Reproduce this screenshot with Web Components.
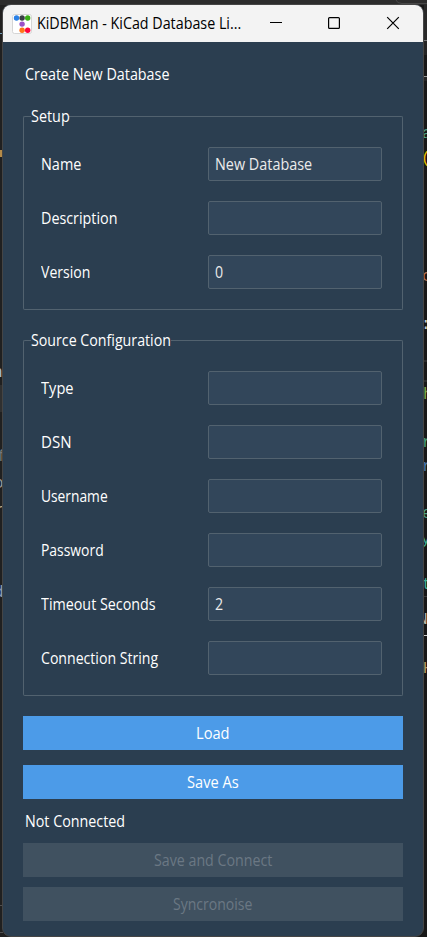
<!DOCTYPE html>
<html lang="en">
<head>
<meta charset="utf-8">
<title>KiDBMan</title>
<style>
html,body{margin:0;height:937px;overflow:hidden;background:#1e1e1e}
body{font:15.4px/20px "Open Sans","Noto Sans",sans-serif;color:#fff}
</style>
</head>
<body>
<editor-backdrop></editor-backdrop>
<app-window>
  <title-bar slot="title"><fit-text w="204">KiDBMan - KiCad Database Li...</fit-text></title-bar>
  <fit-text class="heading" w="144">Create New Database</fit-text>
  <field-group legend="Setup" legend-width="38" style="margin-top:22px;height:203px">
    <form-row label="Name" w="40" value="New Database" value-width="97"></form-row>
    <form-row label="Description" w="76"></form-row>
    <form-row label="Version" w="49" value="0" value-width="8"></form-row>
  </field-group>
  <field-group legend="Source Configuration" legend-width="140" style="margin-top:21px;height:365px">
    <form-row label="Type" w="32"></form-row>
    <form-row label="DSN" w="30"></form-row>
    <form-row label="Username" w="66"></form-row>
    <form-row label="Password" w="62"></form-row>
    <form-row label="Timeout Seconds" w="114" value="2" value-width="8"></form-row>
    <form-row label="Connection String" w="117"></form-row>
  </field-group>
  <push-button style="margin-top:20px"><fit-text w="33">Load</fit-text></push-button>
  <push-button style="margin-top:15px"><fit-text w="51">Save As</fit-text></push-button>
  <fit-text class="status" w="100">Not Connected</fit-text>
  <push-button disabled style="margin-top:11px"><fit-text w="118">Save and Connect</fit-text></push-button>
  <push-button disabled style="margin-top:10px"><fit-text w="79">Syncronoise</fit-text></push-button>
</app-window>
<script>
class Base extends HTMLElement{
  connectedCallback(){
    if(!this.shadowRoot)this.attachShadow({mode:'open'}).innerHTML=this.render();
    this.ready&&this.ready();
  }
}
/* A single-line label condensed to a given width. */
customElements.define('fit-text',class extends Base{
  render(){return `<style>:host{display:block;white-space:nowrap;width:max-content;height:20px}span{display:inline-block;transform-origin:0 50%}</style><span><slot></slot></span>`}
  ready(){
    const s=this.shadowRoot.querySelector('span'),w=+this.getAttribute('w')+.3;
    const natural=s.offsetWidth;
    if(!natural)return;
    this.style.width=w+'px';
    s.style.transform=`scaleX(${(w/natural).toFixed(4)})`;
  }
});
customElements.define('form-row',class extends Base{
  render(){
    const a=k=>this.getAttribute(k)||'';
    return `<style>:host{display:grid;grid-template-columns:167px 174px;align-items:center;height:34px}
    fit-text{padding-top:1px}
    .box{box-sizing:border-box;height:34px;border:1px solid #52626f;border-radius:2px;background:#32465a;color:#ebebeb;display:flex;align-items:center;padding:0 6px}</style>
    <fit-text w="${a('w')}">${a('label')}</fit-text><div class="box">${a('value')?`<fit-text w="${a('value-width')}">${a('value')}</fit-text>`:''}</div>`}
});
customElements.define('field-group',class extends Base{
  render(){return `<style>:host{display:block}
    .g{box-sizing:border-box;height:100%;display:flex;flex-direction:column}
    .top{display:flex;height:20px;align-items:center}
    .l,.r{box-sizing:border-box;height:11px;align-self:flex-end;border-top:1px solid #52626f}
    .l{width:8px;border-left:1px solid #52626f;border-radius:2px 0 0 0}
    .r{flex:1;border-right:1px solid #52626f;border-radius:0 2px 0 0}
    .c{flex:1;box-sizing:border-box;border:1px solid #52626f;border-top:0;border-radius:0 0 2px 2px;padding:20px 0 0 17px;display:flex;flex-direction:column;gap:20px}</style>
    <div class="g"><div class="top"><i class="l"></i><fit-text w="${this.getAttribute('legend-width')}">${this.getAttribute('legend')}</fit-text><i class="r"></i></div><div class="c"><slot></slot></div></div>`}
});
customElements.define('push-button',class extends Base{
  render(){return `<style>:host{display:flex;box-sizing:border-box;height:34px;padding-top:2px;align-items:center;justify-content:center;background:#4c9be8;color:#fff}
    :host([disabled]){background:#405160;color:#6b7884}</style><slot></slot>`}
});
customElements.define('title-bar',class extends Base{
  render(){return `<style>:host{display:flex;box-sizing:border-box;height:37px;background:#f3f3f3;color:#000;align-items:center;padding-left:9px}
    .logo{width:20px;height:20px;flex:none;margin-right:5px}.t{width:220px;padding-top:1px}.b{flex:none}</style>
    <svg class="logo" viewBox="0 0 20 20"><rect x=".5" y=".5" width="19" height="19" rx="2" fill="#fff" stroke="#d5d5d5"/>
    <circle cx="4.5" cy="4" r="2.7" fill="#2980e6"/><circle cx="10.1" cy="4" r="2.7" fill="#3a4045"/><circle cx="15.7" cy="4" r="2.7" fill="#39ad15"/><circle cx="10.1" cy="10.1" r="2.7" fill="#9b50c8"/><circle cx="10.1" cy="16.2" r="2.7" fill="#ff7518"/><circle cx="15.7" cy="16.2" r="2.7" fill="#ff063d"/></svg>
    <div class="t"><slot></slot></div>
    <svg class="b" width="150" height="37" viewBox="257 5 150 37" fill="none" stroke="#000"><path d="M270 22.5h12"/><rect x="328.6" y="17.6" width="10.8" height="10.8" rx="1" stroke-width="1.2"/><path d="M387.2 17.2l11.6 11.6M398.8 17.2l-11.6 11.6" stroke-width="1.2"/></svg>`}
});
customElements.define('app-window',class extends Base{
  render(){return `<style>:host{display:block;position:relative;box-sizing:border-box;margin:0 3px 0 2px;padding-top:4px;height:937px}
    .w{box-sizing:border-box;height:933px;border:1px solid #454545;border-radius:9px;background:#2b3e50;overflow:hidden}
    .m{display:flex;flex-direction:column;padding:23px 20px 0}
    ::slotted(.heading){margin-left:2px}
    ::slotted(.status){margin:13px 0 0 2px}</style>
    <div class="w"><slot name="title"></slot><div class="m"><slot></slot></div></div>`}
});
/* Code editor that shows only at the edges behind the window. */
customElements.define('editor-backdrop',class extends Base{
  render(){
    const g=[[-7,371,'n','#a9bcd0'],[-3,455,'f','#777'],[-6,482,'o','#999'],[-5,509,'r','#b7a784'],[-6,591,'d','#8c9bb5'],
    [422,132,'a','#4f9f83'],[421,157,'(','#e6bd00'],[422,275,'c','#b66f4d'],[421,323,':','#c6ccd4'],[423,393,'h','#80a94c'],[422,441,'r','#4aa078'],[422,465,'r','#4b79ac'],[422,512,'e','#4f9f83'],[421,538,'y','#3fae95'],[422,583,'t','#3fae95'],[418,618,'N','#bdb6a8'],[423,667,'H','#b89b68']];
    const r=[[0,0,427,5,'#2c2c2c'],[0,33,2,1,'#719ab5'],[0,150,2,7,'#b58b48'],[0,385,2,27,'#303030'],[0,905,3,1,'#505050'],[0,932,3,1,'#505050'],
    [424,5,3,35,'#292929'],[424,40,3,1,'#777'],[424,41,3,14,'#252525'],[424,76,3,1,'#999'],[424,360,3,2,'#2c2c2c'],[424,380,3,2,'#2c2c2c'],[424,596,3,1,'#3c3c3c'],[423,635,4,1,'#ccc'],[424,77,3,4,'#252525']];
    return `<style>:host{display:block;position:absolute;left:0;top:0;width:427px;height:937px;overflow:hidden;background:linear-gradient(90deg,#202020 50%,#181818 50%)}svg{display:block;font:16px "Liberation Mono",monospace}</style>
    <svg width="427" height="937">${r.map(([x,y,w,h,c])=>`<rect x="${x}" y="${y}" width="${w}" height="${h}" fill="${c}"/>`).join('')}<path d="M396 0q1 3.5 6 3.5h25" fill="none" stroke="#484848"/>${g.map(([x,y,t,c])=>`<text x="${x}" y="${y+6}" fill="${c}">${t}</text>`).join('')}</svg>`}
});
</script>
</body>
</html>
